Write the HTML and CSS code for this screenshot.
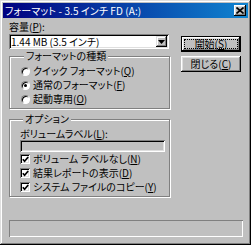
FILE: index.html
```html
<!DOCTYPE html>
<html lang="ja">
<head>
<meta charset="utf-8">
<link rel="stylesheet" href="styles.css">
</head>
<body>
<div class="window">
  <div class="titlebar">
    <span class="title">フォーマット - 3.5 インチ FD (A:)</span>
    <span class="close"><svg width="8" height="7" viewBox="0 0 8 7"><path d="M0.5 0.5 L7.5 6.5 M7.5 0.5 L0.5 6.5" stroke="#000" stroke-width="1.6" fill="none"/></svg></span>
  </div>
  <div class="body">
    <div class="main">
      <div class="left">
        <div class="label">容量(<u>P</u>):</div>
        <div class="combo">
          <span class="combo-text">1.44 MB (3.5 インチ)</span>
          <span class="combo-btn"><svg width="7" height="4" viewBox="0 0 7 4"><path d="M0 0 H7 L3.5 4 Z" fill="#000"/></svg></span>
        </div>
        <fieldset class="group g1">
          <legend>フォーマットの種類</legend>
          <div class="opt"><span class="radio"></span><span>クイック フォーマット(<u>Q</u>)</span></div>
          <div class="opt"><span class="radio on"></span><span>通常のフォーマット(<u>F</u>)</span></div>
          <div class="opt"><span class="radio"></span><span>起動専用(<u>O</u>)</span></div>
        </fieldset>
        <fieldset class="group g2">
          <legend>オプション</legend>
          <div class="label2">ボリュームラベル(<u>L</u>):</div>
          <div class="field"></div>
          <div class="chk"><span class="box"><svg width="7" height="7" viewBox="0 0 7 7"><path d="M0.8 3.2 L2.6 5.2 L6.2 1" stroke="#000" stroke-width="1.7" fill="none"/></svg></span><span>ボリューム ラベルなし(<u>N</u>)</span></div>
          <div class="chk"><span class="box"><svg width="7" height="7" viewBox="0 0 7 7"><path d="M0.8 3.2 L2.6 5.2 L6.2 1" stroke="#000" stroke-width="1.7" fill="none"/></svg></span><span>結果レポートの表示(<u>D</u>)</span></div>
          <div class="chk"><span class="box"><svg width="7" height="7" viewBox="0 0 7 7"><path d="M0.8 3.2 L2.6 5.2 L6.2 1" stroke="#000" stroke-width="1.7" fill="none"/></svg></span><span>システム ファイルのコピー(<u>Y</u>)</span></div>
        </fieldset>
      </div>
      <div class="right">
        <div class="btn default"><span class="focus">開始(<u>S</u>)</span></div>
        <div class="btn">閉じる(<u>C</u>)</div>
      </div>
    </div>
    <div class="status"></div>
  </div>
</div>
</body>
</html>
```

FILE: styles.css
```css
html, body {
  margin: 0;
  background: #c0c0c0;
}
body {
  font-family: "Noto Sans CJK JP", "Noto Sans", sans-serif;
  font-size: 10px;
  line-height: 12px;
  font-feature-settings: "palt";
  color: #000;
}
u {
  text-underline-offset: 1px;
}
.window {
  width: 251px;
  height: 245px;
  box-sizing: border-box;
  padding: 3px;
  background: #c0c0c0;
  box-shadow: inset -1px -1px #000, inset 1px 1px #dfdfdf, inset -2px -2px #808080, inset 2px 2px #fff;
  display: flex;
  flex-direction: column;
}
.titlebar {
  height: 15px;
  flex: none;
  background: linear-gradient(to right, #000080, #1084d0);
  display: flex;
  align-items: center;
  justify-content: space-between;
  padding: 0 2px 0 2px;
}
.title {
  color: #fff;
  line-height: 15px;
  white-space: nowrap;
  letter-spacing: 0.1px;
}
.close {
  width: 12px;
  height: 11px;
  background: #c0c0c0;
  box-shadow: inset -1px -1px #000, inset 1px 1px #fff, inset -2px -2px #808080, inset 2px 2px #dfdfdf;
  display: flex;
  align-items: center;
  justify-content: center;
}
.body {
  flex: 1;
  display: flex;
  flex-direction: column;
  padding: 3px 5px 5px 6px;
}
.main {
  display: flex;
}
.left {
  width: 161px;
  display: flex;
  flex-direction: column;
}
.label {
  height: 12px;
  white-space: nowrap;
}
.combo {
  margin-top: 1px;
  height: 15px;
  width: 160px;
  box-sizing: border-box;
  padding: 2px;
  background: #fff;
  box-shadow: inset 1px 1px #808080, inset -1px -1px #fff, inset 2px 2px #000, inset -2px -2px #dfdfdf;
  display: flex;
  align-items: center;
}
.combo-text {
  flex: 1;
  line-height: 11px;
  white-space: nowrap;
}
.combo-btn {
  width: 11px;
  height: 11px;
  background: #c0c0c0;
  box-shadow: inset -1px -1px #000, inset 1px 1px #dfdfdf, inset -2px -2px #808080, inset 2px 2px #fff;
  display: flex;
  align-items: center;
  justify-content: center;
}
.group {
  margin: 0;
  padding: 0;
  min-inline-size: 0;
  border: 1px solid #808080;
  box-shadow: inset 1px 1px #fff, 1px 1px #fff;
}
.group legend {
  padding: 0 2px;
  margin-left: 3px;
  line-height: 12px;
  background: #c0c0c0;
  white-space: nowrap;
}
.g1 {
  margin-top: 1px;
  padding: 2px 0 2px 11px;
}
.g2 {
  margin-top: 4px;
  padding: 0 0 2px 10px;
}
.opt, .chk {
  height: 14px;
  display: flex;
  align-items: center;
  gap: 3px;
  white-space: nowrap;
}
.radio {
  width: 9px;
  height: 9px;
  box-sizing: border-box;
  border-radius: 50%;
  background: #fff;
  border: 1px solid;
  border-color: #808080 #fff #fff #808080;
  box-shadow: inset 1px 1px #000;
  display: flex;
  align-items: center;
  justify-content: center;
}
.radio.on::after {
  content: "";
  width: 3px;
  height: 3px;
  border-radius: 50%;
  background: #000;
}
.box {
  width: 10px;
  height: 10px;
  box-sizing: border-box;
  background: #fff;
  box-shadow: inset 1px 1px #808080, inset -1px -1px #fff, inset 2px 2px #000, inset -2px -2px #dfdfdf;
  display: flex;
  align-items: center;
  justify-content: center;
}
.box svg {
  margin: 1px 0 0 1px;
}
.label2 {
  margin-top: 3px;
  height: 12px;
  white-space: nowrap;
}
.field {
  width: 145px;
  height: 12px;
  box-shadow: inset 1px 1px #808080, inset -1px -1px #fff, inset 2px 2px #000, inset -2px -2px #dfdfdf;
}
.right {
  margin-left: 11px;
  margin-top: 15px;
  display: flex;
  flex-direction: column;
  gap: 4px;
}
.btn {
  width: 60px;
  height: 16px;
  box-sizing: border-box;
  background: #c0c0c0;
  box-shadow: inset -1px -1px #000, inset 1px 1px #fff, inset -2px -2px #808080, inset 2px 2px #dfdfdf;
  display: flex;
  align-items: center;
  justify-content: center;
  white-space: nowrap;
}
.btn.default {
  border: 1px solid #000;
  padding: 2px;
}
.focus {
  flex: 1;
  align-self: stretch;
  border: 1px dotted #000;
  display: flex;
  align-items: center;
  justify-content: center;
  line-height: 10px;
}
.status {
  margin-top: auto;
  height: 17px;
  box-shadow: inset 1px 1px #808080, inset -1px -1px #fff;
}
```
